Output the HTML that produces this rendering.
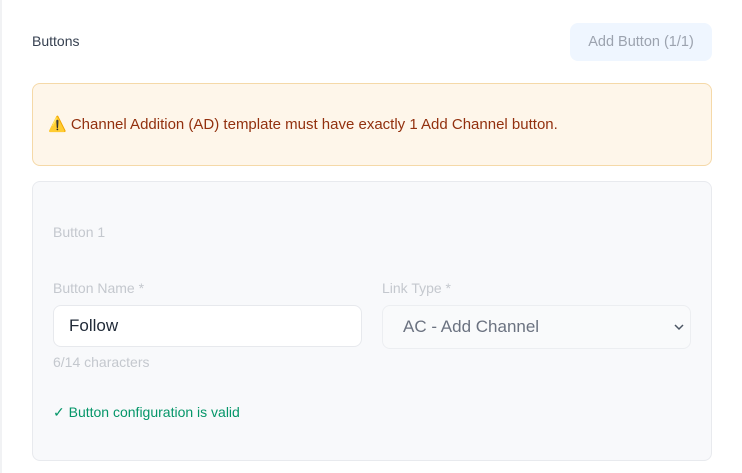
<!DOCTYPE html>
<html><head><style>
*{box-sizing:border-box;margin:0;padding:0}
body{width:742px;height:473px;background:#fff;font-family:"Liberation Sans",sans-serif;position:relative;overflow:hidden}
.abs{position:absolute}
</style></head><body>
<div class="abs" style="left:0;top:0;width:2px;height:473px;background:#f1f2f4"></div>
<div class="abs" style="left:32px;top:33px;font-size:14px;color:#374151">Buttons</div>
<div class="abs" style="left:570px;top:23px;width:142px;height:38px;border-radius:8px;background:#eff6ff;color:#9ca3af;font-size:14.5px;line-height:38px;text-align:center">Add Button (1/1)</div>
<div class="abs" style="left:32px;top:83px;width:680px;height:83px;border:1px solid #f5d9a8;border-radius:8px;background:#fef6ea;color:#92300e;font-size:15px;padding-left:15px;line-height:81px">⚠️ Channel Addition (AD) template must have exactly 1 Add Channel button.</div>
<div class="abs" style="left:32px;top:181px;width:680px;height:280px;border:1px solid #e8eaee;border-radius:8px;background:#f8f9fb"></div>
<div class="abs" style="left:53px;top:224px;font-size:14px;color:#c4c8ce">Button 1</div>
<div class="abs" style="left:53px;top:280px;font-size:14px;color:#c4c8ce">Button Name *</div>
<div class="abs" style="left:382px;top:280px;font-size:14px;color:#c4c8ce">Link Type *</div>
<div class="abs" style="left:53px;top:305px;width:309px;height:42px;border:1px solid #e7e9ed;border-radius:8px;background:#fff;font-size:17px;color:#1f2937;padding-left:15px;line-height:40px">Follow</div>
<div class="abs" style="left:382px;top:305px;width:309px;height:44px;border:1px solid #eceef1;border-radius:8px;background:#f9fafb;font-size:17px;color:#6b7280;padding-left:20px;line-height:42px">AC - Add Channel
<svg class="abs" style="right:6px;top:17px" width="10" height="8" viewBox="0 0 10 8"><path d="M1 2l4 4 4-4" fill="none" stroke="#4b5563" stroke-width="1.5"/></svg></div>
<div class="abs" style="left:53px;top:354px;font-size:14px;color:#c4c8ce">6/14 characters</div>
<div class="abs" style="left:53px;top:404px;font-size:14px;color:#059669">✓ Button configuration is valid</div>
</body></html>
